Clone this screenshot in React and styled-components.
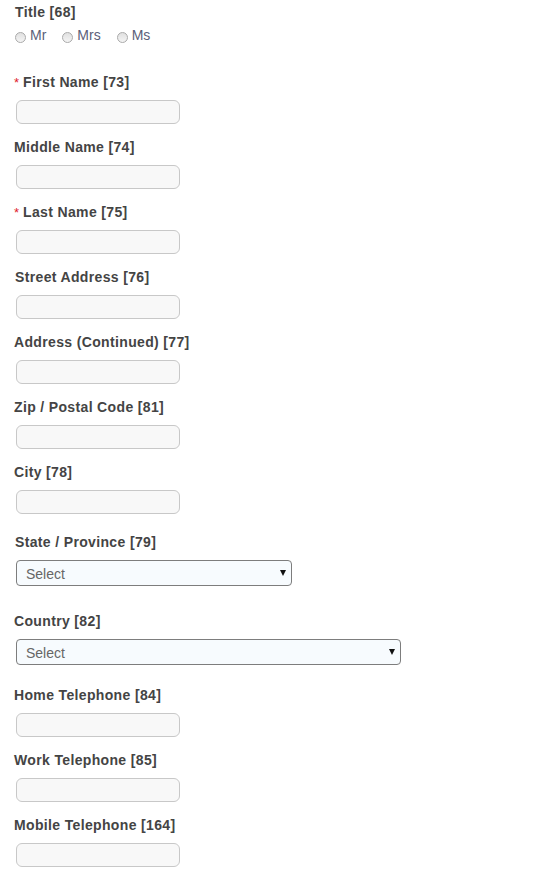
import React from 'react';
import styled, { createGlobalStyle } from 'styled-components';

const GlobalStyle = createGlobalStyle`
    body {
        margin: 0;
        background: #fff;
        font-family: "Liberation Sans", Arial, sans-serif;
    }
`
const Form = styled.form`
    display: flex;
    flex-direction: column;
    padding: 4px 0 0 14px;
    width: 558px;
    box-sizing: border-box;
`
const Field = styled.div`
    display: flex;
    flex-direction: column;
    align-items: flex-start;
    margin-bottom: ${({gap}) => (gap || 15) + 'px'};
`
const Label = styled.label`
    display: block;
    font-size: 14px;
    font-weight: bold;
    letter-spacing: 0.35px;
    line-height: 16px;
    height: 16px;
    color: #444;
    padding-left: ${({shift}) => (shift || 0) + 'px'};
`
const Required = styled.span`
    color: #e0202a;
    font-weight: normal;
    font-size: 13px;
    letter-spacing: 0;
    margin-right: 4px;
`
const TextInput = styled.input`
    box-sizing: border-box;
    width: 164px;
    height: 24px;
    margin: 10px 0 0 2px;
    padding: 0 6px;
    border: 1px solid #c8c8c8;
    border-radius: 6px;
    background: #f8f8f8;
    font-family: inherit;
    font-size: 13px;
    outline: none;
`
const RadioRow = styled.div`
    display: flex;
    gap: 16px;
    margin: 8px 0 0 1px;
    height: 19px;
`
const RadioOption = styled.label`
    display: flex;
    align-items: flex-start;
    gap: 4px;
    font-size: 14px;
    line-height: 15px;
    color: #5b6079;
`
const RadioDot = styled.span`
    width: 11px;
    height: 11px;
    margin-top: 4px;
    border-radius: 50%;
    border: 1px solid #aaa;
    box-sizing: border-box;
    background: linear-gradient(#e0e0e0, #f4f4f4);
`
const SelectWrap = styled.div`
    position: relative;
    margin: 10px 0 0 2px;
    width: ${({w}) => w + 'px'};
`
const Select = styled.select`
    appearance: none;
    -webkit-appearance: none;
    box-sizing: border-box;
    width: 100%;
    height: 26px;
    padding: 2px 0 0 9px;
    border: 1px solid #7d7d7d;
    border-radius: 4px;
    background: #f7fbfe;
    color: #666;
    font-family: inherit;
    font-size: 14px;
    outline: none;
`
const Arrow = styled.span`
    position: absolute;
    right: 6px;
    top: 10px;
    width: 0;
    height: 0;
    border-left: 3px solid transparent;
    border-right: 3px solid transparent;
    border-top: 6px solid #111;
    pointer-events: none;
`

const textFields = [
    { label: 'First Name [73]', required: true },
    { label: 'Middle Name [74]' },
    { label: 'Last Name [75]', required: true },
    { label: 'Street Address [76]', shift: 1 },
    { label: 'Address (Continued) [77]' },
    { label: 'Zip / Postal Code [81]' },
    { label: 'City [78]', gap: 20 },
]

const phones = ['Home Telephone [84]', 'Work Telephone [85]', 'Mobile Telephone [164]']

function TextField({ label, required, shift, gap }) {
    return (
        <Field gap={gap}>
            <Label shift={shift}>
                {required && <Required>*</Required>}
                {label}
            </Label>
            <TextInput type="text" />
        </Field>
    )
}

function SelectField({ label, width, gap, shift }) {
    return (
        <Field gap={gap}>
            <Label shift={shift}>{label}</Label>
            <SelectWrap w={width}>
                <Select defaultValue="">
                    <option value="">Select</option>
                </Select>
                <Arrow />
            </SelectWrap>
        </Field>
    )
}

export default function App() {
    return (
        <>
            <GlobalStyle />
            <Form>
                <Field gap={27}>
                    <Label shift={1}>Title [68]</Label>
                    <RadioRow>
                        {['Mr', 'Mrs', 'Ms'].map(t => (
                            <RadioOption key={t}>
                                <RadioDot />
                                {t}
                            </RadioOption>
                        ))}
                    </RadioRow>
                </Field>
                {textFields.map(f => <TextField key={f.label} {...f} />)}
                <SelectField label="State / Province [79]" width={276} gap={27} shift={1} />
                <SelectField label="Country [82]" width={385} gap={22} />
                {phones.map(p => <TextField key={p} label={p} />)}
            </Form>
        </>
    )
}
